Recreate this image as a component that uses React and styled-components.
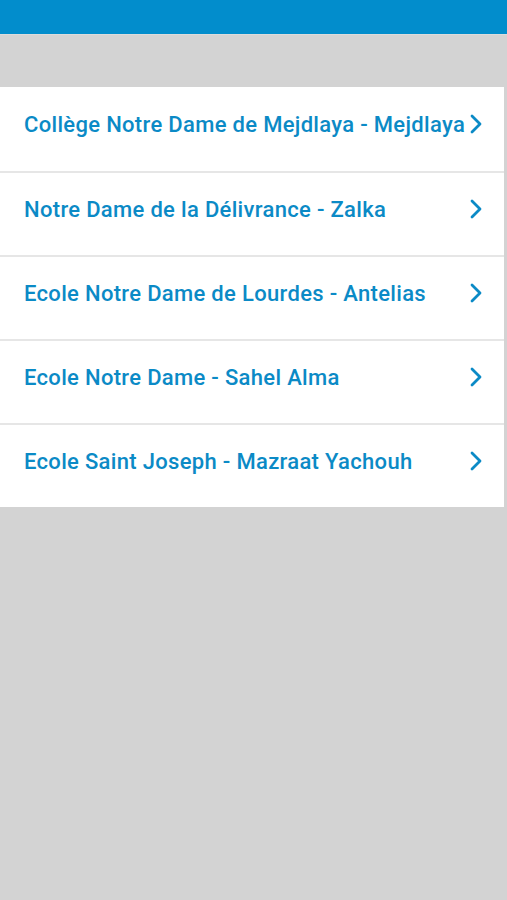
import React from "react";
import styled, { createGlobalStyle } from "styled-components";

const Global = createGlobalStyle`
  html, body { margin: 0; padding: 0; background: #d3d3d3; }
  body { font-family: Roboto, "Noto Sans", sans-serif; }
`;

const Page = styled.div`
  min-height: 900px;
  background: #d3d3d3;
  display: flex;
  flex-direction: column;
`;

const Header = styled.header`
  height: 34px;
  background: #028dcc;
  border-bottom: 1px solid #dcdcdc;
`;

const Spacer = styled.div`
  height: 52px;
`;

const List = styled.ul`
  list-style: none;
  margin: 0 3px 0 0;
  padding: 0;
  background: #fff;
`;

const Row = styled.li`
  height: 84px;
  display: flex;
  align-items: center;
  justify-content: space-between;
  padding: 0 22px 10px 24px;
  box-sizing: border-box;
  border-top: ${(p) => (p.$first ? "none" : "2px solid #e6e6e6")};
`;

const Label = styled.span`
  color: #0b8ac6;
  font-family: Roboto, sans-serif;
  font-weight: 500;
  font-size: 22px;
  letter-spacing: 0.32px;
  white-space: nowrap;
`;

const Chevron = () => (
  <svg width="12" height="20" viewBox="0 0 12 20" fill="none">
    <path d="M2 2 L10 10 L2 18" stroke="#0b8ac6" strokeWidth="2.8" strokeLinecap="round" strokeLinejoin="round" />
  </svg>
);

const items = [
  "Collège Notre Dame de Mejdlaya - Mejdlaya",
  "Notre Dame de la Délivrance - Zalka",
  "Ecole Notre Dame de Lourdes - Antelias",
  "Ecole Notre Dame - Sahel Alma",
  "Ecole Saint Joseph - Mazraat Yachouh",
];

export default function App() {
  return (
    <Page>
      <Global />
      <Header />
      <Spacer />
      <List>
        {items.map((t, i) => (
          <Row key={t} $first={i === 0}>
            <Label>{t}</Label>
            <Chevron />
          </Row>
        ))}
      </List>
    </Page>
  );
}
